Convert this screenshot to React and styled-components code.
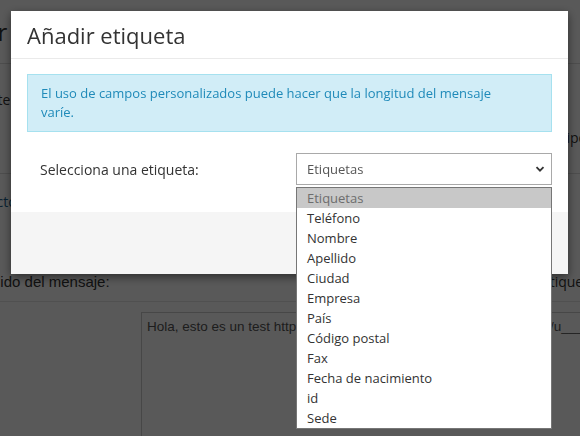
import styled, { createGlobalStyle } from "styled-components";

const GlobalStyle = createGlobalStyle`
  html, body {
    margin: 0;
    padding: 0;
    width: 580px;
    height: 436px;
    overflow: hidden;
    background: #fff;
  }
`;

const Page = styled.div`
  width: 580px;
  font-family: "Liberation Sans", Arial, sans-serif;
  font-size: 14px;
  color: #333;
`;

const PageHeader = styled.div`
  height: 63px;
  border-bottom: 1px solid #ddd;
  display: flex;
  align-items: center;
  margin-left: ${({ $indent }) => $indent}px;
  font-size: 24px;
  font-family: "Open Sans", sans-serif;
`;

const PageRow = styled.div`
  display: grid;
  grid-template-columns: 1fr auto;
  height: ${({ $h }) => $h}px;
  border-bottom: ${({ $line }) => ($line ? "1px solid #ddd" : "none")};
  font-family: "Open Sans", sans-serif;
`;

const Cell = styled.span`
  align-self: ${({ $align }) => $align || "center"};
  margin-left: ${({ $indent }) => $indent || 0}px;
  margin-right: ${({ $right }) => $right || 0}px;
  padding-top: ${({ $pt }) => $pt || 0}px;
  padding-bottom: ${({ $pb }) => $pb || 0}px;
  color: ${({ color }) => color || "#333"};
`;

const Accent = styled.span`
  color: #d35400;
`;

const LabelRow = styled.div`
  display: flex;
  justify-content: space-between;
  align-items: center;
  height: 24px;
  padding-bottom: 8px;
  border-bottom: 1px solid #e4e4e4;
  margin-top: 13px;
  font-size: 15px;
`;

const TagLink = styled.span`
  margin-right: -16px;
  font-size: 14px;
  font-family: "Open Sans", sans-serif;
`;

const MessageArea = styled.div`
  margin: 10px 0 0 141px;
  height: 140px;
  border: 1px solid #ccc;
  border-right: none;
  padding: 6px 5px;
  font-size: 13.5px;
  color: #555;
  white-space: nowrap;
  overflow: hidden;
`;

const Overlay = styled.div`
  position: fixed;
  inset: 0;
  background: rgba(0, 0, 0, 0.65);
  padding: 11px 12px 0 11px;
`;

const Modal = styled.div`
  background: #fff;
  box-shadow: 0 3px 9px rgba(0, 0, 0, 0.5);
  font-family: "Open Sans", sans-serif;
  color: #333;
`;

const ModalHeader = styled.div`
  height: 47px;
  border-bottom: 1px solid #eaeaea;
  display: flex;
  align-items: center;
  padding: 0 16px;
`;

const Title = styled.h4`
  margin: 0;
  font-weight: 400;
  font-size: 22px;
  color: #333;
`;

const ModalBody = styled.div`
  padding: 15px 16px 27px;
`;

const Alert = styled.div`
  background: #d1edf7;
  border: 1px solid #a6e1ef;
  color: #1f8ab9;
  font-size: 13px;
  line-height: 19px;
  padding: 9px 40px 9px 13px;
`;

const FieldRow = styled.div`
  display: flex;
  align-items: center;
  justify-content: space-between;
  margin-top: 21px;
  padding-left: 13px;
`;

const Label = styled.label`
  font-size: 14px;
  color: #333;
`;

const SelectWrap = styled.div`
  position: relative;
  width: 256px;
`;

const SelectBox = styled.div`
  height: 30px;
  border: 1px solid #a9a9a9;
  display: flex;
  align-items: center;
  justify-content: space-between;
  padding: 0 5px 0 10px;
  font-size: 13px;
  color: #555;
`;

const OptionList = styled.ul`
  position: absolute;
  top: calc(100% + 2px);
  left: 0;
  right: 0;
  margin: 0;
  padding: 0;
  list-style: none;
  background: #fff;
  border: 1px solid #767676;
  z-index: 10;
`;

const Option = styled.li`
  height: 20px;
  line-height: 20px;
  padding-left: 10px;
  font-size: 13px;
  color: ${({ $active }) => ($active ? "#6d6d6d" : "#333")};
  background: ${({ $active }) => ($active ? "#c8c8c8" : "#fff")};
`;

const ModalFooter = styled.div`
  height: 62px;
  background: #f5f5f5;
`;

const Chevron = () => (
  <svg width="12" height="12" viewBox="0 0 12 12">
    <path d="M2.5 4.2 6 7.7 9.5 4.2" fill="none" stroke="#333" strokeWidth="1.8" />
  </svg>
);

const options = [
  "Etiquetas",
  "Teléfono",
  "Nombre",
  "Apellido",
  "Ciudad",
  "Empresa",
  "País",
  "Código postal",
  "Fax",
  "Fecha de nacimiento",
  "id",
  "Sede",
];

export default function App() {
  return (
    <>
      <GlobalStyle />
      <Page>
        <PageHeader $indent={-62}>Enviar</PageHeader>
        <PageRow $h={109} $line>
          <Cell $indent={-57} $align="start" $pt={26}>
            Remitente <Accent>*</Accent>
          </Cell>
          <Cell $align="end" $pb={26} $right={-7}>
            Tipo
          </Cell>
        </PageRow>
        <PageRow $h={82}>
          <Cell $indent={-42} $align="start" $pt={18} color="#1a5f8c">
            Contactos
          </Cell>
        </PageRow>
        <LabelRow>
          <Cell $indent={-48}>Contenido del mensaje:</Cell>
          <TagLink>Añadir etiqueta</TagLink>
        </LabelRow>
        <MessageArea>
          Hola, esto es un test https://www.ejemplo.com/campanas/enlaces/s/u______
        </MessageArea>
      </Page>
      <Overlay>
        <Modal>
          <ModalHeader>
            <Title>Añadir etiqueta</Title>
          </ModalHeader>
          <ModalBody>
            <Alert>
              El uso de campos personalizados puede hacer que la longitud del mensaje varíe.
            </Alert>
            <FieldRow>
              <Label>Selecciona una etiqueta:</Label>
              <SelectWrap>
                <SelectBox>
                  <span>Etiquetas</span>
                  <Chevron />
                </SelectBox>
                <OptionList>
                  {options.map((o, i) => (
                    <Option key={o} $active={i === 0}>
                      {o}
                    </Option>
                  ))}
                </OptionList>
              </SelectWrap>
            </FieldRow>
          </ModalBody>
          <ModalFooter />
        </Modal>
      </Overlay>
    </>
  );
}
